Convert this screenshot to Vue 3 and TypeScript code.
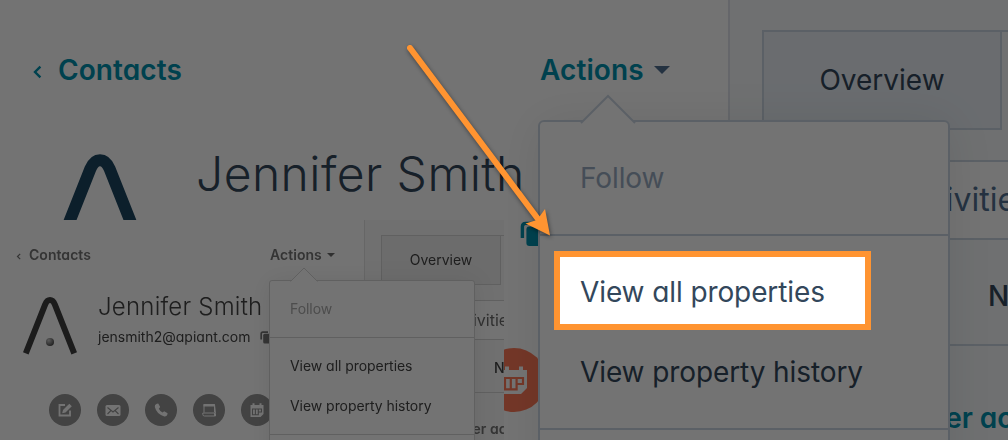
<template>
  <div class="stage">
    <div v-for="view in views" :key="view" class="record" :class="`record--${view}`">
      <section class="profile">
        <header class="profile-nav">
          <svg class="back" viewBox="0 0 5 7"><path d="M4.200 .8 1.500 3.500 4.200 6.200" /></svg>
          <span class="nav-link nav-link--back">Contacts</span>
          <span class="nav-link nav-link--actions">Actions</span>
          <svg class="nav-caret" viewBox="0 0 8 4"><path d="M0 0h8L4 4z" /></svg>
        </header>

        <div class="identity">
          <svg class="avatar" viewBox="0 0 54 58">
            <defs>
              <radialGradient :id="`ball-${view}`" cx=".35" cy=".3" r=".75">
                <stop offset="0" stop-color="#c8c8c8" />
                <stop offset=".6" stop-color="#7c7c7c" />
                <stop offset="1" stop-color="#484848" />
              </radialGradient>
            </defs>
            <path class="avatar-mark" d="M2.800 56.300 22.200 7.400Q24 3.100 27 3.100T31.800 7.400L51.200 56.300" />
            <circle cx="27" cy="45" r="4" :fill="`url(#ball-${view})`" />
          </svg>
          <div class="identity-text">
            <div class="name">Jennifer Smith</div>
            <div class="email-row">
              <span class="email">jensmith2@apiant.com</span>
              <svg class="copy" viewBox="0 0 13 13">
                <path class="copy-back" d="M1.200 8.500V2.800Q1.200 1.200 2.800 1.200H8" />
                <rect x="3.200" y="2.800" width="9" height="9.700" rx="1.500" />
              </svg>
            </div>
          </div>
        </div>

        <div class="quick-actions">
          <span v-for="action in actions" :key="action" class="quick-action">
            <svg viewBox="0 0 16 16">
              <template v-if="action === 'note'">
                <path class="line" d="M8 3H2.500v10.500h10.500V8.500" />
                <path class="solid" d="M6 8 12.300 1.700l2.500 2.500L8.500 10.500 5.200 11.200z" />
              </template>
              <template v-else-if="action === 'email'">
                <rect class="solid" x="0.500" y="3" width="15" height="11" rx="1.500" />
                <path class="cut" d="m2.500 5.500 5.500 4.500 5.500-4.500M2.500 12l3.500-3.500M13.500 12 10 8.500" />
              </template>
              <path
                v-else-if="action === 'call'"
                class="solid"
                d="M3.800 1.800 5.200 1.500 7.200 5 5.800 6.800Q7 9.300 9.500 10.500L11.200 9.200 14.600 11.300 14.300 12.800Q13.500 14.800 11.300 14.400 3.800 12.500 1.800 5 1.300 2.700 3.800 1.800z"
              />
              <template v-else-if="action === 'log'">
                <path class="thin" d="M3 10.500V2.500h10.500v8M1.800 11h11.700v3H3.500Q1.800 14 1.800 12.300zM13.500 2.500l1 9v2.500h-1" />
                <path class="solid" d="M2.500 2h11v2.500h-11z" />
              </template>
              <template v-else>
                <path class="solid" d="M1.500 3h2V1.200h2V3h5V1.200h2V3h2v9L11.500 15h-10z" />
                <path class="cut" d="M3.500 7h9v3h-3.200v2.700H3.500zM6.400 7v5.500M9.300 7v3" />
              </template>
            </svg>
          </span>
        </div>
      </section>

      <section class="details">
        <div class="tabs">
          <div class="tab">Overview</div>
          <div class="tab-rest"></div>
        </div>
        <div class="search">Activities</div>
        <div class="subtabs">Notes</div>
        <div class="filters">Filter activity</div>
      </section>

      <div class="menu">
        <svg class="menu-arrow" viewBox="0 0 28 15"><path d="M.5 14.500 14 1l13.500 13.500" /></svg>
        <div class="menu-group menu-group--follow">
          <div class="menu-item menu-item--disabled">Follow</div>
        </div>
        <div class="menu-group">
          <div class="menu-item">View all properties</div>
          <div class="menu-item">View property history</div>
        </div>
      </div>
    </div>

    <div class="spotlight"></div>
    <svg class="pointer" viewBox="0 0 1008 440">
      <path class="pointer-line" d="M410 48 538 219" />
      <path class="pointer-head" d="M550 235.500 525.500 223.500 537 220 545 209z" />
    </svg>
  </div>
</template>

<script setup lang="ts">
type View = 'large' | 'small'
type Action = 'note' | 'email' | 'call' | 'log' | 'meeting'

const views: View[] = ['large', 'small']
const actions: Action[] = ['note', 'email', 'call', 'log', 'meeting']
</script>

<style>
body {
  margin: 0;
}
</style>

<style scoped>
.stage {
  position: relative;
  width: 1008px;
  height: 440px;
  overflow: hidden;
  background: #fff;
  font-family: Inter, 'Liberation Sans', sans-serif;
  font-feature-settings: 'cv11';
}

.record {
  position: relative;
  display: flex;
  width: 504px;
  height: 220px;
  overflow: hidden;
  box-sizing: border-box;
  background: #fff;
  color: #33475b;
  font-size: 14px;
  line-height: 20px;
  white-space: nowrap;
}

.record * {
  box-sizing: border-box;
}

.record--large {
  zoom: 2;
}

/* the small grey copy sits over the lower left quarter */
.record--small {
  position: absolute;
  left: 0;
  top: 220px;
  filter: grayscale(1);
}

.profile {
  flex: 0 0 364px;
}

.profile-nav {
  display: flex;
  align-items: center;
  height: 20px;
  margin-top: 25px;
  padding-left: 16px;
}

.back {
  width: 5px;
  height: 7px;
  margin-top: 2px;
  fill: none;
  stroke: #0091ae;
  stroke-width: 1.2;
}

.nav-link {
  color: #0091ae;
  font-weight: 600;
  letter-spacing: 0.04px;
}

.nav-link--back {
  width: 241px;
  margin-left: 8px;
}

.nav-link--actions {
  width: 57px;
}

.nav-caret {
  width: 8px;
  height: 4px;
  fill: #516f90;
}

.identity {
  display: flex;
  height: 62px;
  margin-top: 32px;
  padding-left: 23px;
}

.avatar {
  width: 54px;
  height: 58px;
}

.avatar-mark {
  fill: none;
  stroke: #1b4560;
  stroke-width: 6;
}

.identity-text {
  margin-left: 21px;
}

.name {
  margin-top: -6px;
  font-size: 24px;
  font-weight: 300;
  line-height: 32px;
  letter-spacing: 0.22px;
}

.email-row {
  display: flex;
  align-items: center;
  margin-top: 4px;
}

.email {
  width: 162px;
}

.copy {
  width: 13px;
  height: 13px;
  fill: #0091ae;
}

.copy-back {
  fill: none;
  stroke: #0091ae;
  stroke-width: 1.700;
}

.quick-actions {
  display: flex;
  gap: 16px;
  margin-top: 35px;
  padding-left: 49px;
}

.quick-action {
  display: flex;
  flex: none;
  align-items: center;
  justify-content: center;
  width: 32px;
  height: 32px;
  border-radius: 50%;
  background: #ff7a59;
}

.quick-action svg {
  width: 16px;
  height: 16px;
}

.solid {
  fill: #fff;
}

.line {
  fill: none;
  stroke: #fff;
  stroke-width: 1.800;
}

.thin {
  fill: none;
  stroke: #fff;
  stroke-width: 1;
}

.cut {
  fill: none;
  stroke: #ff7a59;
  stroke-width: 1.100;
}

.details {
  flex: 1;
  min-width: 0;
  border-left: 1px solid #dfe3eb;
  background: #f5f8fa;
}

.tabs {
  display: flex;
  height: 50px;
  margin: 15px 0 0 16px;
}

.tab {
  flex: none;
  width: 120px;
  border: 1px solid #cbd6e2;
  background: #eaf0f6;
  line-height: 48px;
  text-align: center;
}

.tab-rest {
  flex: 1;
  border-top: 1px solid #cbd6e2;
}

.search {
  height: 40px;
  margin-top: 15px;
  padding-left: 82.5px;
  border: solid #cbd6e2;
  border-width: 1px 0;
  background: #fff;
  color: #516f90;
  font-size: 16px;
  line-height: 38px;
}

.subtabs {
  height: 53px;
  padding-left: 129px;
  border-bottom: 1px solid #cbd6e2;
  font-weight: 500;
  line-height: 56px;
}

.filters {
  margin-top: 26px;
  padding-left: 87px;
  color: #0091ae;
  font-weight: 600;
}

.menu {
  position: absolute;
  left: 269px;
  top: 60px;
  width: 206px;
  height: 200px;
  border: 1px solid #cbd6e2;
  border-radius: 3px;
  background: #fff;
  box-shadow: 0 1px 24px rgba(0, 0, 0, 0.08);
}

.menu-arrow {
  position: absolute;
  left: 20px;
  top: -14px;
  width: 28px;
  height: 15px;
  fill: #fff;
  stroke: #cbd6e2;
  stroke-width: 1;
}

.menu-group {
  padding: 8px 20px;
  border-bottom: 1px solid #cbd6e2;
}

.menu-group--follow {
  height: 57px;
}

.menu-item {
  height: 40px;
  line-height: 40px;
  letter-spacing: -0.05px;
}

.menu-item--disabled {
  color: #99acc2;
}

.spotlight {
  position: absolute;
  left: 554px;
  top: 251px;
  width: 305px;
  height: 67px;
  border: 6px solid #ff9431;
  box-shadow: 0 0 0 1000px rgba(0, 0, 0, 0.55);
}

.pointer {
  position: absolute;
  left: 0;
  top: 0;
  width: 1008px;
  height: 440px;
  filter: drop-shadow(1px 2px 2px rgba(0, 0, 0, 0.45));
}

.pointer-line {
  fill: none;
  stroke: #ff9431;
  stroke-width: 6;
  stroke-linecap: round;
}

.pointer-head {
  fill: #ff9431;
}
</style>
